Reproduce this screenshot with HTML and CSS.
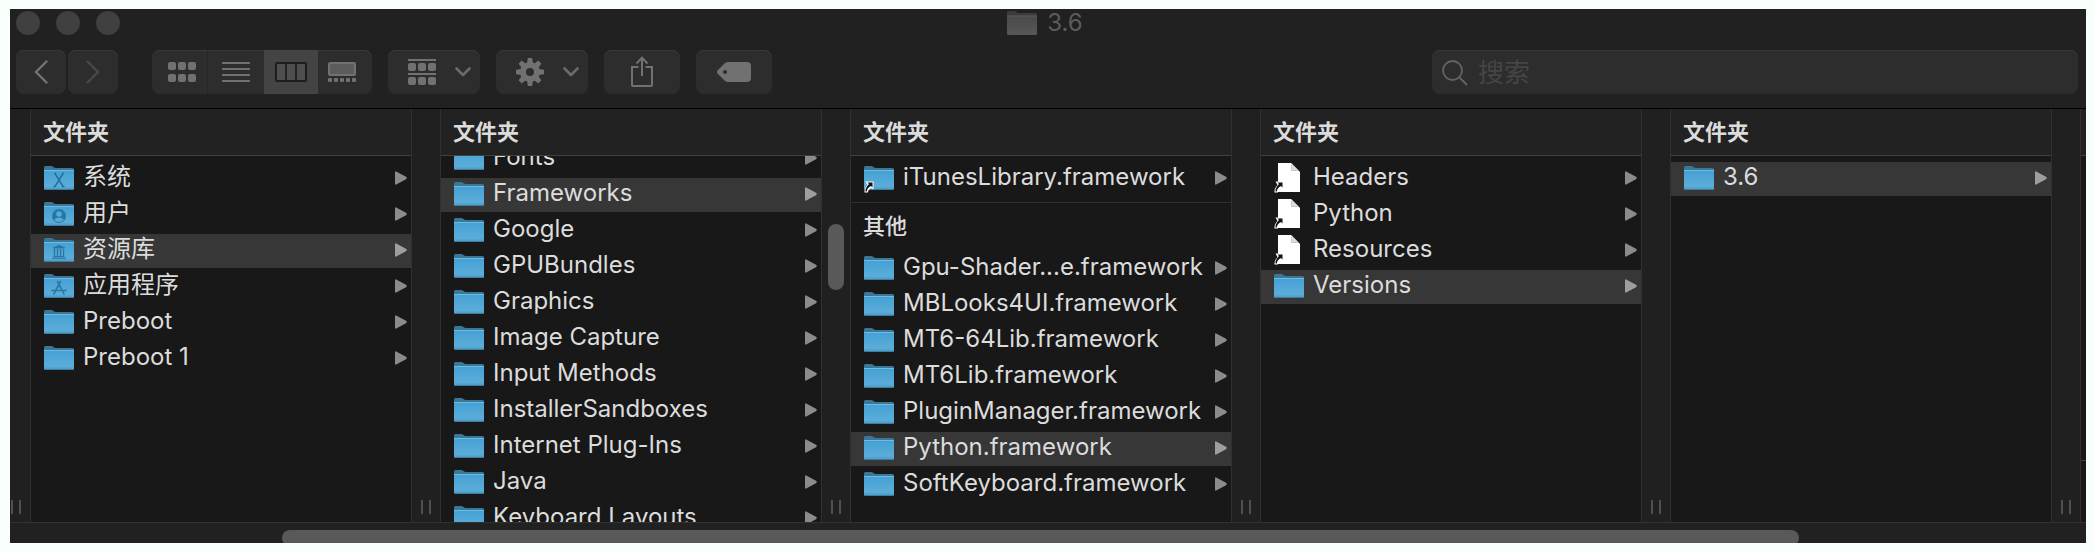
FILE: index.html
```html
<!DOCTYPE html>
<html lang="zh-CN">
<head>
<meta charset="utf-8">
<title>3.6</title>
<link rel="stylesheet" href="styles.css">
</head>
<body>
<svg class="defs" aria-hidden="true">
  <defs>
    <linearGradient id="blue" x1="0" y1="0" x2="0" y2="1">
      <stop offset="0" stop-color="#44a0d4"/><stop offset=".8" stop-color="#5badd9"/><stop offset="1" stop-color="#4b97c0"/>
    </linearGradient>
    <linearGradient id="gray" x1="0" y1="0" x2="0" y2="1">
      <stop offset="0" stop-color="#4a4a4a"/><stop offset="1" stop-color="#575757"/>
    </linearGradient>
    <symbol id="folder" viewBox="0 0 30 24">
      <path d="M0 6V1.500Q0 0 1.500 0H7q1.500 0 2.500 1t2.500 1H28.500Q30 2 30 3.500V6z" fill="#3b7797"/>
      <path d="M0 4h30v18.500q0 1.500-1.500 1.500h-27Q0 24 0 22.500z" fill="url(#blue)"/>
      <path d="M0 4.500h30" stroke="#6fbce3"/>
      <path d="M1 23.500h28" stroke="#3c7ca0"/>
    </symbol>
    <symbol id="folder-gray" viewBox="0 0 30 24">
      <path d="M0 6V1.500Q0 0 1.500 0H7q1.500 0 2.500 1t2.500 1H28.500Q30 2 30 3.500V6z" fill="#3c3c3c"/>
      <path d="M0 5h30v17.500q0 1.500-1.500 1.500h-27Q0 24 0 22.500z" fill="url(#gray)"/>
      <path d="M0 5h30" stroke="#5d5d5d"/>
    </symbol>
    <symbol id="alias" viewBox="0 0 10 12">
      <path d="M1.500.5h8v8L7 7Q4 8.500 3.800 11.500H.5Q0 7.500 3.500 4z" fill="#fff"/>
      <path d="M3.500 1.500h5v5L7 5Q3 7 2.800 10.500H1.500Q1 7 5 3z" fill="#111"/>
    </symbol>
    <symbol id="arrow" viewBox="0 0 12 14">
      <path d="M0 1.200Q0 0 1.200.4L11 5.800Q12.500 7 11 8.200L1.200 13.600Q0 14 0 12.800z" fill="currentColor"/>
    </symbol>
    <symbol id="doc" viewBox="0 0 30 30">
      <path d="M4 0H17L26 9V29H4z" fill="#fff"/>
      <path d="M17 0l9 9q-1-1.500-4-1.500h-4.500Q18.500 2 17 0z" fill="#dedede"/>
      <path d="M17.500 2v5.500H24" fill="none" stroke="#c4c4c4"/>
      <use href="#alias" x="0" y="18" width="10" height="12"/>
    </symbol>
    <symbol id="folder-alias" viewBox="0 0 30 30">
      <use href="#folder" x="0" y="3" width="30" height="24"/>
      <use href="#alias" x="0" y="18" width="10" height="12"/>
    </symbol>
    <symbol id="folder-x" viewBox="0 0 30 24">
      <use href="#folder" width="30" height="24"/>
      <path d="M10 7.500h2M18.500 7.500h1.500M9.500 20.500h2M18.500 20.500h2M11 7.500l8 13M19 7.500l-8 13" fill="none" stroke="#276f9b" stroke-width="1.500"/>
    </symbol>
    <symbol id="folder-user" viewBox="0 0 30 24">
      <use href="#folder" width="30" height="24"/>
      <circle cx="15" cy="14" r="7" fill="#2a76a3"/>
      <circle cx="15" cy="12" r="2.800" fill="#55abd8"/>
      <path d="M10 18q1.500-2 3.500-2.300h3Q18.500 16 20 18q-2 2-5 2t-5-2z" fill="#55abd8"/>
    </symbol>
    <symbol id="folder-library" viewBox="0 0 30 24">
      <use href="#folder" width="30" height="24"/>
      <path d="M9 10.500v-1l6-2.700 6 2.700v1zM9.500 18h11v1h-11zM8 19.600h14v1.200H8z" fill="#2a76a3"/>
      <path d="M10.500 11v7M13.500 11v7M16.500 11v7M19.500 11v7" stroke="#2a76a3" stroke-width="1.300"/>
    </symbol>
    <symbol id="folder-apps" viewBox="0 0 30 24">
      <use href="#folder" width="30" height="24"/>
      <path d="M13.500 7.500l6.500 12.500M16.500 7.500L9.800 20M8 16.500h8.500M19.500 16.500H22" fill="none" stroke="#2a76a3" stroke-width="1.600" stroke-linecap="round"/>
    </symbol>
    <symbol id="chevron" viewBox="0 0 16 10">
      <path d="M1.500 1.500L8 8l6.500-6.500" fill="none" stroke="#6b6b6b" stroke-width="2.600" stroke-linecap="round" stroke-linejoin="round"/>
    </symbol>
  </defs>
</svg>

<main class="window">
  <header class="titlebar">
    <div class="lights">
      <button class="light" aria-label="关闭"></button>
      <button class="light" aria-label="最小化"></button>
      <button class="light" aria-label="缩放"></button>
    </div>
    <h1 class="title"><svg class="folder"><use href="#folder-gray"/></svg>3.6</h1>
  </header>

  <div class="toolbar">
    <div class="nav">
      <button class="tool nav-button" aria-label="后退"><svg width="14" height="24" viewBox="0 0 14 24"><path d="M12.500 1.500L2 12l10.500 10.500" fill="none" stroke="#737373" stroke-width="2.400" stroke-linecap="round"/></svg></button>
      <button class="tool nav-button" aria-label="前进"><svg width="14" height="24" viewBox="0 0 14 24"><path d="M1.500 1.500L12 12 1.500 22.500" fill="none" stroke="#484848" stroke-width="2.400" stroke-linecap="round"/></svg></button>
    </div>
    <div class="tool views">
      <button class="view" aria-label="图标"><svg width="28" height="20" fill="#717171"><rect width="8" height="8" rx="2"/><rect x="10" width="8" height="8" rx="2"/><rect x="20" width="8" height="8" rx="2"/><rect y="12" width="8" height="8" rx="2"/><rect x="10" y="12" width="8" height="8" rx="2"/><rect x="20" y="12" width="8" height="8" rx="2"/></svg></button>
      <button class="view" aria-label="列表"><svg width="28" height="20"><path d="M0 1h28M0 7h28M0 13h28M0 19h28" stroke="#717171" stroke-width="2"/></svg></button>
      <button class="view view-on" aria-label="分栏" aria-pressed="true"><svg width="32" height="20"><rect x="1" y="1" width="30" height="18" rx="1" fill="#4f4f4f" stroke="#1d1d1d" stroke-width="2"/><path d="M11 1v18M21 1v18" stroke="#242424" stroke-width="2"/></svg></button>
      <button class="view" aria-label="画廊"><svg width="28" height="20"><rect x="1" y="1" width="26" height="12" rx="1" fill="#5c5c5c" stroke="#717171" stroke-width="2"/><g fill="#717171"><rect y="16" width="4" height="4" rx="1"/><rect x="6" y="16" width="4" height="4" rx="1"/><rect x="12" y="16" width="4" height="4" rx="1"/><rect x="18" y="16" width="4" height="4" rx="1"/><rect x="24" y="16" width="4" height="4" rx="1"/></g></svg></button>
    </div>
    <button class="tool menu" aria-label="分组"><svg width="28" height="26" fill="#717171"><rect width="28" height="2"/><rect y="14" width="28" height="2"/><rect y="4" width="8" height="8" rx="2"/><rect x="10" y="4" width="8" height="8" rx="2"/><rect x="20" y="4" width="8" height="8" rx="2"/><rect y="18" width="8" height="8" rx="2"/><rect x="10" y="18" width="8" height="8" rx="2"/><rect x="20" y="18" width="8" height="8" rx="2"/></svg><svg class="chevron"><use href="#chevron"/></svg></button>
    <button class="tool menu" aria-label="操作"><svg width="28" height="28" viewBox="-14 -14 28 28"><circle r="7" fill="none" stroke="#717171" stroke-width="6"/><g fill="#717171"><path id="teeth" d="M-3-8l.8-6h4.400l.8 6zM-3 8l.8 6h4.400l.8-6zM-8-3l-6 .8v4.400l6 .8zM8-3l6 .8v4.400l-6 .8z"/><use href="#teeth" transform="rotate(45)"/></g></svg><svg class="chevron"><use href="#chevron"/></svg></button>
    <button class="tool action" aria-label="共享"><svg width="24" height="32" viewBox="0 0 24 32"><path d="M8.500 11H2v18q0 1 1 1h18q1 0 1-1V11h-6.500M12 20V2M6.500 7.500L12 1.800l5.500 5.700" fill="none" stroke="#717171" stroke-width="2"/></svg></button>
    <button class="tool action" aria-label="标记"><svg width="34" height="20" viewBox="0 0 34 20"><path d="M11 0H30q4 0 4 4V16q0 4-4 4H11q-2 0-3.500-1.500L1 12q-2-2 0-4L7.500 1.500Q9 0 11 0z" fill="#717171"/><circle cx="8" cy="10" r="2" fill="#2d2d2d"/></svg></button>
    <label class="tool search">
      <svg width="26" height="26" viewBox="0 0 26 26"><circle cx="10.500" cy="10.500" r="9.500" fill="none" stroke="#636363" stroke-width="1.800"/><path d="M17.500 17.500l7.500 7.500" stroke="#636363" stroke-width="2"/></svg>
      <input class="search-input" type="search" placeholder="搜索" aria-label="搜索">
    </label>
  </div>

  <div class="columns">
    <div class="gutter gutter-first"><span class="grip"></span></div>

    <section class="column">
      <h2 class="heading">文件夹</h2>
      <div class="body"><ul class="list">
        <li><button class="row"><svg class="folder"><use href="#folder-x"/></svg><span class="name">系统</span><svg class="arrow"><use href="#arrow"/></svg></button></li>
        <li><button class="row"><svg class="folder"><use href="#folder-user"/></svg><span class="name">用户</span><svg class="arrow"><use href="#arrow"/></svg></button></li>
        <li><button class="row selected"><svg class="folder"><use href="#folder-library"/></svg><span class="name">资源库</span><svg class="arrow"><use href="#arrow"/></svg></button></li>
        <li><button class="row"><svg class="folder"><use href="#folder-apps"/></svg><span class="name">应用程序</span><svg class="arrow"><use href="#arrow"/></svg></button></li>
        <li><button class="row"><svg class="folder"><use href="#folder"/></svg><span class="name">Preboot</span><svg class="arrow"><use href="#arrow"/></svg></button></li>
        <li><button class="row"><svg class="folder"><use href="#folder"/></svg><span class="name">Preboot 1</span><svg class="arrow"><use href="#arrow"/></svg></button></li>
      </ul></div>
    </section>
    <div class="gutter"><span class="grip"></span></div>

    <section class="column">
      <h2 class="heading">文件夹</h2>
      <div class="body"><ul class="list scrolled">
        <li><button class="row"><svg class="folder"><use href="#folder"/></svg><span class="name">Fonts</span><svg class="arrow"><use href="#arrow"/></svg></button></li>
        <li><button class="row selected"><svg class="folder"><use href="#folder"/></svg><span class="name">Frameworks</span><svg class="arrow"><use href="#arrow"/></svg></button></li>
        <li><button class="row"><svg class="folder"><use href="#folder"/></svg><span class="name">Google</span><svg class="arrow"><use href="#arrow"/></svg></button></li>
        <li><button class="row"><svg class="folder"><use href="#folder"/></svg><span class="name">GPUBundles</span><svg class="arrow"><use href="#arrow"/></svg></button></li>
        <li><button class="row"><svg class="folder"><use href="#folder"/></svg><span class="name">Graphics</span><svg class="arrow"><use href="#arrow"/></svg></button></li>
        <li><button class="row"><svg class="folder"><use href="#folder"/></svg><span class="name">Image Capture</span><svg class="arrow"><use href="#arrow"/></svg></button></li>
        <li><button class="row"><svg class="folder"><use href="#folder"/></svg><span class="name">Input Methods</span><svg class="arrow"><use href="#arrow"/></svg></button></li>
        <li><button class="row"><svg class="folder"><use href="#folder"/></svg><span class="name">InstallerSandboxes</span><svg class="arrow"><use href="#arrow"/></svg></button></li>
        <li><button class="row"><svg class="folder"><use href="#folder"/></svg><span class="name">Internet Plug-Ins</span><svg class="arrow"><use href="#arrow"/></svg></button></li>
        <li><button class="row"><svg class="folder"><use href="#folder"/></svg><span class="name">Java</span><svg class="arrow"><use href="#arrow"/></svg></button></li>
        <li><button class="row"><svg class="folder"><use href="#folder"/></svg><span class="name">Keyboard Layouts</span><svg class="arrow"><use href="#arrow"/></svg></button></li>
      </ul></div>
    </section>
    <div class="gutter"><span class="thumb"></span><span class="grip"></span></div>

    <section class="column">
      <h2 class="heading">文件夹</h2>
      <div class="body"><ul class="list">
        <li><button class="row"><svg class="doc"><use href="#folder-alias"/></svg><span class="name">iTunesLibrary.framework</span><svg class="arrow"><use href="#arrow"/></svg></button></li>
      </ul>
      <h3 class="group">其他</h3>
      <ul class="list list-group">
        <li><button class="row"><svg class="folder"><use href="#folder"/></svg><span class="name">Gpu-Shader...e.framework</span><svg class="arrow"><use href="#arrow"/></svg></button></li>
        <li><button class="row"><svg class="folder"><use href="#folder"/></svg><span class="name">MBLooks4UI.framework</span><svg class="arrow"><use href="#arrow"/></svg></button></li>
        <li><button class="row"><svg class="folder"><use href="#folder"/></svg><span class="name">MT6-64Lib.framework</span><svg class="arrow"><use href="#arrow"/></svg></button></li>
        <li><button class="row"><svg class="folder"><use href="#folder"/></svg><span class="name">MT6Lib.framework</span><svg class="arrow"><use href="#arrow"/></svg></button></li>
        <li><button class="row"><svg class="folder"><use href="#folder"/></svg><span class="name">PluginManager.framework</span><svg class="arrow"><use href="#arrow"/></svg></button></li>
        <li><button class="row selected"><svg class="folder"><use href="#folder"/></svg><span class="name">Python.framework</span><svg class="arrow"><use href="#arrow"/></svg></button></li>
        <li><button class="row"><svg class="folder"><use href="#folder"/></svg><span class="name">SoftKeyboard.framework</span><svg class="arrow"><use href="#arrow"/></svg></button></li>
      </ul></div>
    </section>
    <div class="gutter"><span class="grip"></span></div>

    <section class="column">
      <h2 class="heading">文件夹</h2>
      <div class="body"><ul class="list">
        <li><button class="row"><svg class="doc"><use href="#doc"/></svg><span class="name">Headers</span><svg class="arrow"><use href="#arrow"/></svg></button></li>
        <li><button class="row"><svg class="doc"><use href="#doc"/></svg><span class="name">Python</span><svg class="arrow"><use href="#arrow"/></svg></button></li>
        <li><button class="row"><svg class="doc"><use href="#doc"/></svg><span class="name">Resources</span><svg class="arrow"><use href="#arrow"/></svg></button></li>
        <li><button class="row selected"><svg class="folder"><use href="#folder"/></svg><span class="name">Versions</span><svg class="arrow"><use href="#arrow"/></svg></button></li>
      </ul></div>
    </section>
    <div class="gutter"><span class="grip"></span></div>

    <section class="column">
      <h2 class="heading">文件夹</h2>
      <div class="body"><ul class="list">
        <li><button class="row selected"><svg class="folder"><use href="#folder"/></svg><span class="name">3.6</span><svg class="arrow"><use href="#arrow"/></svg></button></li>
      </ul></div>
    </section>
    <div class="gutter"><span class="grip"></span></div>

    <div class="column column-edge">
      <div class="heading"></div>
      <div class="edge-preview"></div>
    </div>
  </div>

  <footer class="scrollbar"><div class="scroll-thumb"></div></footer>
</main>
</body>
</html>
```
FILE: styles.css
```css
* {
  box-sizing: border-box;
}

body {
  margin: 0;
  height: 100vh;
  padding: 9px 8px 9px 10px;
  background: #f9fffa;
  color: #dcdcdc;
  font-family: Inter, "Noto Sans CJK SC", sans-serif;
  font-size: 24px;
}

button {
  margin: 0;
  padding: 0;
  border: 0;
  background: none;
  color: inherit;
  font: inherit;
}

h1, h2, h3, ul {
  margin: 0;
  padding: 0;
  list-style: none;
}

svg {
  display: block;
  flex: none;
}

.defs {
  position: absolute;
  width: 0;
  height: 0;
}

.window {
  display: flex;
  flex-direction: column;
  height: 100%;
  overflow: hidden;
  background: #212121;
}

.titlebar {
  display: grid;
  grid-template-columns: 1fr auto 1fr;
  align-items: center;
  height: 27px;
  padding: 0 6px;
}

.lights {
  display: flex;
  gap: 16px;
}

.light {
  width: 24px;
  height: 24px;
  border-radius: 50%;
  background: #404040;
}

.title {
  display: flex;
  align-items: center;
  gap: 10px;
  padding-right: 6px;
  color: #5c5c5c;
  font-size: 24px;
  line-height: 24px;
  font-weight: 400;
}

.toolbar {
  display: flex;
  gap: 16px;
  padding: 14px 8px 14px 6px;
  border-bottom: 1px solid #000;
}

.tool {
  height: 44px;
  border-radius: 8px;
  background: #2d2d2d;
  box-shadow: inset 0 1px #3a3a3a;
}

.nav {
  display: flex;
  gap: 2px;
  margin-right: 18px;
}

.nav-button {
  display: flex;
  align-items: center;
  justify-content: center;
  width: 50px;
}

.views {
  display: flex;
  overflow: hidden;
}

.view {
  display: flex;
  align-items: center;
  justify-content: center;
  width: 54px;
}

.view:first-child {
  width: 56px;
  padding-left: 4px;
  border-right: 1px solid #262626;
}

.view:nth-child(2) {
  width: 56px;
}

.view:last-child {
  padding-right: 6px;
}

.view-on {
  background: #444;
}

.menu {
  display: flex;
  align-items: center;
  justify-content: space-between;
  width: 92px;
  padding: 0 9px 0 20px;
}

.chevron {
  width: 16px;
  height: 10px;
}

.action {
  display: flex;
  align-items: center;
  justify-content: center;
  width: 76px;
}

.search {
  display: flex;
  align-items: center;
  gap: 10px;
  width: 646px;
  margin-left: auto;
  padding: 2px 10px 0;
}

.search-input {
  flex: 1;
  min-width: 0;
  padding: 0;
  border: 0;
  outline: 0;
  background: none;
  color: #dcdcdc;
  font: inherit;
  font-size: 26px;
  line-height: 40px;
}

.search-input::placeholder {
  color: #454545;
  opacity: 1;
}

.columns {
  display: flex;
  flex: 1;
  min-height: 0;
  overflow: hidden;
  border-bottom: 1px solid #323232;
}

.gutter {
  display: flex;
  flex-direction: column;
  align-items: center;
  width: 28px;
  flex: none;
  padding-bottom: 8px;
  background: #202020;
}

.gutter-first {
  width: 20px;
  align-items: flex-end;
  padding-right: 9px;
}

.grip {
  width: 10px;
  height: 14px;
  margin-top: auto;
  border: solid #505050;
  border-width: 0 2px;
}

.thumb {
  width: 16px;
  height: 66px;
  margin-top: 115px;
  border-radius: 8px;
  background: #595959;
}

.column {
  display: flex;
  flex-direction: column;
  flex: 1;
  min-width: 0;
  border: solid #303030;
  border-width: 0 1px;
  background: #181818;
}

.heading {
  height: 47px;
  flex: none;
  padding-left: 12px;
  border-bottom: 1px solid #404040;
  background: #222;
  font-size: 22px;
  line-height: 46px;
  font-weight: 600;
}

.body {
  flex: 1;
  min-height: 0;
  overflow: hidden;
}

.list {
  display: flex;
  flex-direction: column;
  gap: 2px;
  padding: 6px 0;
}

.scrolled {
  margin-top: -20px;
}

.list-group {
  padding-top: 2px;
}

.row {
  display: flex;
  align-items: center;
  width: 100%;
  height: 34px;
  padding: 0 4px 2px 13px;
  text-align: left;
}

.selected {
  background: #373737;
}

.folder {
  width: 30px;
  height: 24px;
}

.doc {
  width: 30px;
  height: 30px;
}

.name {
  flex: 1;
  min-width: 0;
  margin-left: 9px;
  padding-bottom: 2px;
  line-height: 30px;
  white-space: nowrap;
}

.arrow {
  width: 12px;
  height: 14px;
  color: #8b8b8b;
}

.selected .arrow {
  color: #9e9e9e;
}

.group {
  padding-left: 12px;
  border-top: 1px solid #303030;
  font-size: 22px;
  line-height: 47px;
  font-weight: 500;
}

.column-edge {
  flex: 0 0 6px;
  border-right: 0;
}

.column-edge .heading {
  padding: 0;
}

.edge-preview {
  flex: 0 0 305px;
  border-bottom: 1px solid #404040;
}

.scrollbar {
  height: 20px;
  flex: none;
  padding: 7px 287px 0 272px;
  overflow: hidden;
}

.scroll-thumb {
  height: 16px;
  border-radius: 8px;
  background: #595959;
}
```
